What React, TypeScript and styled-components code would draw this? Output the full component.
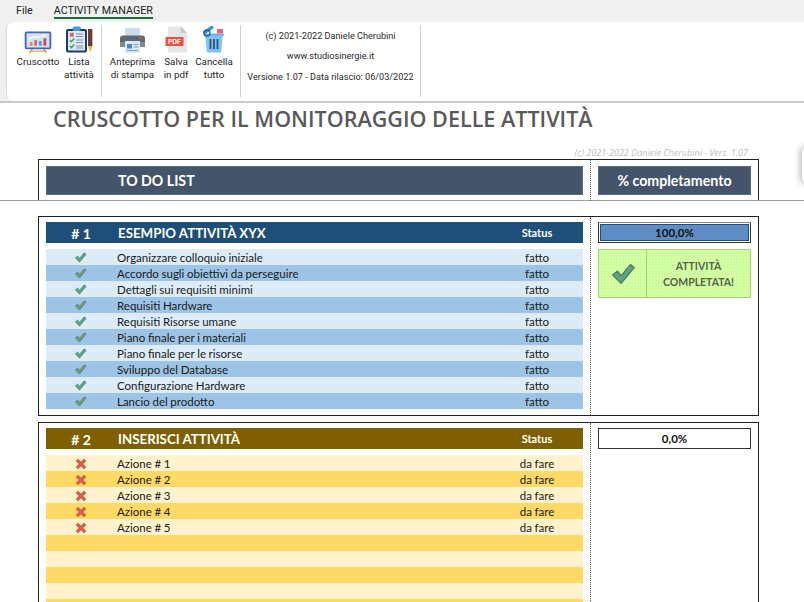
import React from "react";
import styled, { createGlobalStyle } from "styled-components";

const Global = createGlobalStyle`
  html, body { margin: 0; padding: 0; background: #fff; }
  body { width: 804px; height: 602px; overflow: hidden; font-family: "Lato", "Liberation Sans", sans-serif; }
`;

const Page = styled.div`width:804px;height:602px;overflow:hidden;display:flex;flex-direction:column;background:#fff;position:relative;`;
const MenuBar = styled.div`height:22px;background:#f0f0f0;display:flex;align-items:flex-start;padding-left:16px;gap:21px;font:10.7px "Roboto",sans-serif;color:#222;flex:none;`;
const MenuItem = styled.div<{ $active?: boolean }>`
  padding-top:4px;height:${p => (p.$active ? 13 : 15)}px;line-height:13px;
  border-bottom:${p => (p.$active ? "2px solid #1b6b3c" : "none")};
`;
const RibbonWrap = styled.div`background:#f0f0f0;padding-left:6px;flex:none;border-bottom:2px solid #c9c9c9;`;
const Ribbon = styled.div`height:79px;background:#fff;border-top-left-radius:7px;border-bottom-left-radius:7px;border-left:1px solid #dcdcdc;display:flex;padding:3px 0 4px;box-sizing:border-box;`;
const Group = styled.div<{ $w: number; $pl: number }>`width:${p => p.$w}px;padding-left:${p => p.$pl}px;box-sizing:border-box;display:flex;border-right:1px solid #cfcfcf;`;
const RBtn = styled.div<{ $w: number }>`width:${p => p.$w}px;display:flex;flex-direction:column;align-items:center;font:9.8px/13px "Roboto",sans-serif;color:#262626;text-align:center;white-space:nowrap;`;
const IconSlot = styled.div`height:28px;margin-bottom:2px;display:flex;align-items:flex-end;`;
const Info = styled.div`flex:1;display:flex;flex-direction:column;align-items:center;padding-top:1px;font:9.15px/20.3px "Roboto",sans-serif;color:#2a2a2a;white-space:nowrap;`;

const Title = styled.h1`margin:2px 0 0 53px;font:600 21.55px/27px "Open Sans",sans-serif;color:#595959;white-space:nowrap;flex:none;`;
const Caption = styled.div`margin:15px 56px 0 0;text-align:right;font:italic 9px/12px "Open Sans",sans-serif;color:#bdbdbd;flex:none;`;

const Frozen = styled.div`flex:none;height:41px;border-bottom:1px solid #a0a0a0;`;
const Box = styled.div<{ $open?: boolean }>`
  width:721px;margin-left:38px;box-sizing:border-box;border:1px solid #222;
  ${p => (p.$open ? "border-bottom:none;" : "")}
  display:grid;grid-template-columns:552px 1fr;
`;
const FrozenBox = styled(Box)`height:41px;`;
const LeftCell = styled.div<{ $top?: number }>`padding:${p => p.$top ?? 5}px 7px 6px 7px;border-right:1px dotted #555;`;
const RightCell = styled.div<{ $top?: number }>`padding:${p => p.$top ?? 5}px 7px 0 7px;`;
const HeadBar = styled.div`height:29px;background:#44546a;color:#fff;font:700 14.2px/29px "Lato",sans-serif;display:flex;box-shadow:inset 0 0 0 1px #5b6b80;`;
const HeadText = styled.span`margin-left:72px;`;
const HeadRight = styled(HeadBar)`justify-content:center;width:153px;`;

const SectionWrap = styled.div`margin-top:15px;flex:none;`;
const SectionNext = styled.div`margin-top:6px;flex:none;`;
const SecHead = styled.div<{ $bg: string }>`height:21px;background:${p => p.$bg};color:#fff;display:grid;grid-template-columns:70px 1fr 92px;align-items:start;margin-bottom:6px;`;
const SecNum = styled.div`text-align:center;font:700 14px/23px "Lato",sans-serif;`;
const SecName = styled.div`padding-left:2px;font:700 13.3px/23px "Lato",sans-serif;`;
const SecStatus = styled.div`text-align:center;font:700 11px/22px "Lato",sans-serif;`;
const Row = styled.div<{ $bg: string }>`height:16px;background:${p => p.$bg};display:grid;grid-template-columns:70px 1fr 92px;align-items:center;font:11.5px/17px "Lato",sans-serif;word-spacing:-.3px;color:#1a1a1a;`;
const RowMark = styled.div`display:flex;justify-content:center;padding-right:1px;`;
const RowLabel = styled.div`padding-left:1px;white-space:nowrap;`;
const RowStatus = styled.div`text-align:center;`;

const Progress = styled.div<{ $bg: string; $filled?: boolean }>`
  width:153px;height:21px;box-sizing:border-box;text-align:center;font:700 11.5px/19px "Lato",sans-serif;color:#111;
  background:${p => p.$bg};border:1px solid #333;
  ${p => (p.$filled ? "border-top-color:#888;box-shadow:inset 0 0 0 1px #fff,inset 0 0 0 2px #1f4e79;" : "")}
`;
const Done = styled.div`
  width:153px;height:49px;margin-top:6px;box-sizing:border-box;border:1px solid #a6d96a;display:grid;grid-template-columns:48px 1fr;
  background-color:#ccff99;background-image:radial-gradient(#eaffd8 .7px,transparent .8px);background-size:3px 3px;
`;
const DoneIcon = styled.div`display:flex;align-items:center;justify-content:center;border-right:1px solid #9ed267;`;
const DoneText = styled.div`display:flex;align-items:center;justify-content:center;text-align:center;font:700 10.5px/16px "Lato",sans-serif;color:#55624a;`;
const Glow = styled.div`position:absolute;right:-6px;top:148px;width:8px;height:34px;border-radius:6px;background:#fff;box-shadow:0 0 6px 2px #bbb;`;

const Check = ({ s = 13 }: { s?: number }) => (
  <svg width={s} height={s} viewBox="0 0 14 14"><path d="M1.5 7.5 L4 5.5 L6 8 L11 2 L13 3.5 L6 12 Z" fill="#63a283" stroke="#4f7f6c" strokeWidth=".8" strokeLinejoin="round" /></svg>
);
const Cross = () => (
  <svg width="12" height="12" viewBox="0 0 12 12"><path d="M1 3 L3 1 L6 4 L9 1 L11 3 L8 6 L11 9 L9 11 L6 8 L3 11 L1 9 L4 6 Z" fill="#d9604a" stroke="#c4573f" strokeWidth=".6" strokeLinejoin="round" /></svg>
);

const Board = () => (
  <svg width="28" height="22" viewBox="0 0 30 24">
    <path d="M9 19 L6 24 M21 19 L24 24" stroke="#e9a63f" strokeWidth="1.8" fill="none" />
    <path d="M6 22h18" stroke="#e9a63f" strokeWidth="1.4" />
    <rect x="1.5" y="1.5" width="27" height="17.5" rx="1" fill="#d4e0f5" stroke="#3f66c4" strokeWidth="2" />
    <rect x="6" y="12" width="3" height="4" fill="#ee8a3c" /><rect x="11" y="10" width="3" height="6" fill="#e86060" />
    <rect x="16" y="11" width="3" height="5" fill="#49a2e0" /><rect x="21" y="8" width="3" height="8" fill="#d9483f" />
    <path d="M5 9 L11 6 L15 7 L23 4" stroke="#fff" strokeWidth="1.2" fill="none" />
  </svg>
);
const ListIcon = () => (
  <svg width="28" height="27" viewBox="0 0 28 27">
    <rect x="1" y="3" width="21" height="23.5" rx="2" fill="#1e3a66" />
    <rect x="3" y="5" width="17" height="19.5" fill="#dfe7f6" />
    <rect x="7.5" y="0.5" width="8.5" height="4.5" rx="2" fill="#3e9be4" />
    <path d="M5 7 L8.5 10.5 M8.5 7 L5 10.5" stroke="#e2424a" strokeWidth="1.6" />
    <path d="M4.8 14 L6.4 15.6 L9.2 12.6 M4.8 20 L6.4 21.6 L9.2 18.6" stroke="#3da84f" strokeWidth="1.5" fill="none" />
    <path d="M11 8h7M11 10.5h7M11 14h7M11 16.5h7M11 20h7M11 22h7" stroke="#7d8fc4" strokeWidth="1" />
    <rect x="23" y="3" width="4.4" height="17" fill="#6c3f2e" />
    <path d="M23 20h4.4l-2.2 6z" fill="#f0b23e" />
  </svg>
);
const Printer = () => (
  <svg width="27" height="26" viewBox="0 0 27 26">
    <path d="M6 9V1h15v8z" fill="#c9dcf2" />
    <path d="M1 11.5a3 3 0 0 1 3-3h19a3 3 0 0 1 3 3V19H1z" fill="#5f6770" />
    <rect x="20" y="10" width="3" height="1.6" fill="#e0524a" />
    <rect x="1" y="15" width="25" height="5" fill="#7f8a94" />
    <rect x="6" y="14" width="15" height="12" fill="#dbe8f6" />
    <rect x="8" y="17" width="5" height="4.5" fill="#4b86c8" /><path d="M14.5 17.5h5M14.5 20h5M8 23.5h11" stroke="#6b9ed6" strokeWidth="1.1" />
  </svg>
);
const Pdf = () => (
  <svg width="23" height="27" viewBox="0 0 23 27">
    <path d="M3 .5h13l6 6.5v19.5H3z" fill="#e4e6e9" />
    <path d="M16 .5v6.5h6z" fill="#c3c7cc" />
    <rect x="0.5" y="11" width="18" height="9" fill="#e8503f" />
    <text x="9.5" y="18" textAnchor="middle" fontSize="6.5" fontWeight="700" fill="#fff" fontFamily="Liberation Sans">PDF</text>
  </svg>
);
const Trash = () => (
  <svg width="22" height="27" viewBox="0 0 22 27">
    <path d="M4 26.5h14l1.8-17H2.2z" fill="#7cc4f2" />
    <rect x="1" y="7.5" width="20" height="2.5" rx="1" fill="#6fb4e6" />
    <path d="M7.5 13v10M11 13v10M14.5 13v10" stroke="#35506e" strokeWidth="1.8" />
    <path d="M1 7 L10 .5" stroke="#2f8fe0" strokeWidth="3.2" />
    <circle cx="4" cy="7" r="3" fill="none" stroke="#2b5f9c" strokeWidth="1.4" />
    <rect x="14" y="3" width="6" height="4.5" fill="#ee5d8c" />
  </svg>
);

const blue = ["Organizzare colloquio iniziale", "Accordo sugli obiettivi da perseguire", "Dettagli sui requisiti minimi", "Requisiti Hardware", "Requisiti Risorse umane", "Piano finale per i materiali", "Piano finale per le risorse", "Sviluppo del Database", "Configurazione Hardware", "Lancio del prodotto"];
const yellow = ["Azione # 1", "Azione # 2", "Azione # 3", "Azione # 4", "Azione # 5", "", "", "", "", "", ""];

export default function App() {
  return (
    <Page>
      <Global />
      <MenuBar><MenuItem>File</MenuItem><MenuItem $active>ACTIVITY MANAGER</MenuItem></MenuBar>
      <RibbonWrap>
        <Ribbon>
          <Group $w={95} $pl={8}>
            <RBtn $w={46}><IconSlot><Board /></IconSlot>Cruscotto</RBtn>
            <RBtn $w={36}><IconSlot><ListIcon /></IconSlot>Lista<br />attività</RBtn>
          </Group>
          <Group $w={139} $pl={6}>
            <RBtn $w={49}><IconSlot><Printer /></IconSlot>Anteprima<br />di stampa</RBtn>
            <RBtn $w={38}><IconSlot><Pdf /></IconSlot>Salva<br />in pdf</RBtn>
            <RBtn $w={38}><IconSlot><Trash /></IconSlot>Cancella<br />tutto</RBtn>
          </Group>
          <Group $w={180} $pl={0}>
            <Info>
              <div>(c) 2021-2022 Daniele Cherubini</div>
              <div>www.studiosinergie.it</div>
              <div>Versione 1.07 - Data rilascio: 06/03/2022</div>
            </Info>
          </Group>
        </Ribbon>
      </RibbonWrap>
      <Title>CRUSCOTTO PER IL MONITORAGGIO DELLE ATTIVITÀ</Title>
      <Caption>(c) 2021-2022 Daniele Cherubini - Vers. 1.07</Caption>
      <Frozen>
        <FrozenBox $open>
          <LeftCell $top={6}><HeadBar><HeadText>TO DO LIST</HeadText></HeadBar></LeftCell>
          <RightCell $top={6}><HeadRight>% completamento</HeadRight></RightCell>
        </FrozenBox>
      </Frozen>
      <SectionWrap>
        <Box>
          <LeftCell>
            <SecHead $bg="#1f4e79"><SecNum># 1</SecNum><SecName>ESEMPIO ATTIVITÀ XYX</SecName><SecStatus>Status</SecStatus></SecHead>
            {blue.map((t, i) => (
              <Row key={t} $bg={i % 2 ? "#9dc3e6" : "#ddebf7"}>
                <RowMark><Check /></RowMark><RowLabel>{t}</RowLabel><RowStatus>fatto</RowStatus>
              </Row>
            ))}
          </LeftCell>
          <RightCell>
            <Progress $bg="#5f8cc5" $filled>100,0%</Progress>
            <Done>
              <DoneIcon><Check s={26} /></DoneIcon>
              <DoneText>ATTIVITÀ<br />COMPLETATA!</DoneText>
            </Done>
          </RightCell>
        </Box>
      </SectionWrap>
      <SectionNext>
        <Box $open>
          <LeftCell>
            <SecHead $bg="#7f6000"><SecNum># 2</SecNum><SecName>INSERISCI ATTIVITÀ</SecName><SecStatus>Status</SecStatus></SecHead>
            {yellow.map((t, i) => (
              <Row key={i} $bg={i % 2 ? "#ffd966" : "#fff2cc"}>
                <RowMark>{t && <Cross />}</RowMark><RowLabel>{t}</RowLabel><RowStatus>{t && "da fare"}</RowStatus>
              </Row>
            ))}
          </LeftCell>
          <RightCell><Progress $bg="#fff">0,0%</Progress></RightCell>
        </Box>
      </SectionNext>
      <Glow />
    </Page>
  );
}
